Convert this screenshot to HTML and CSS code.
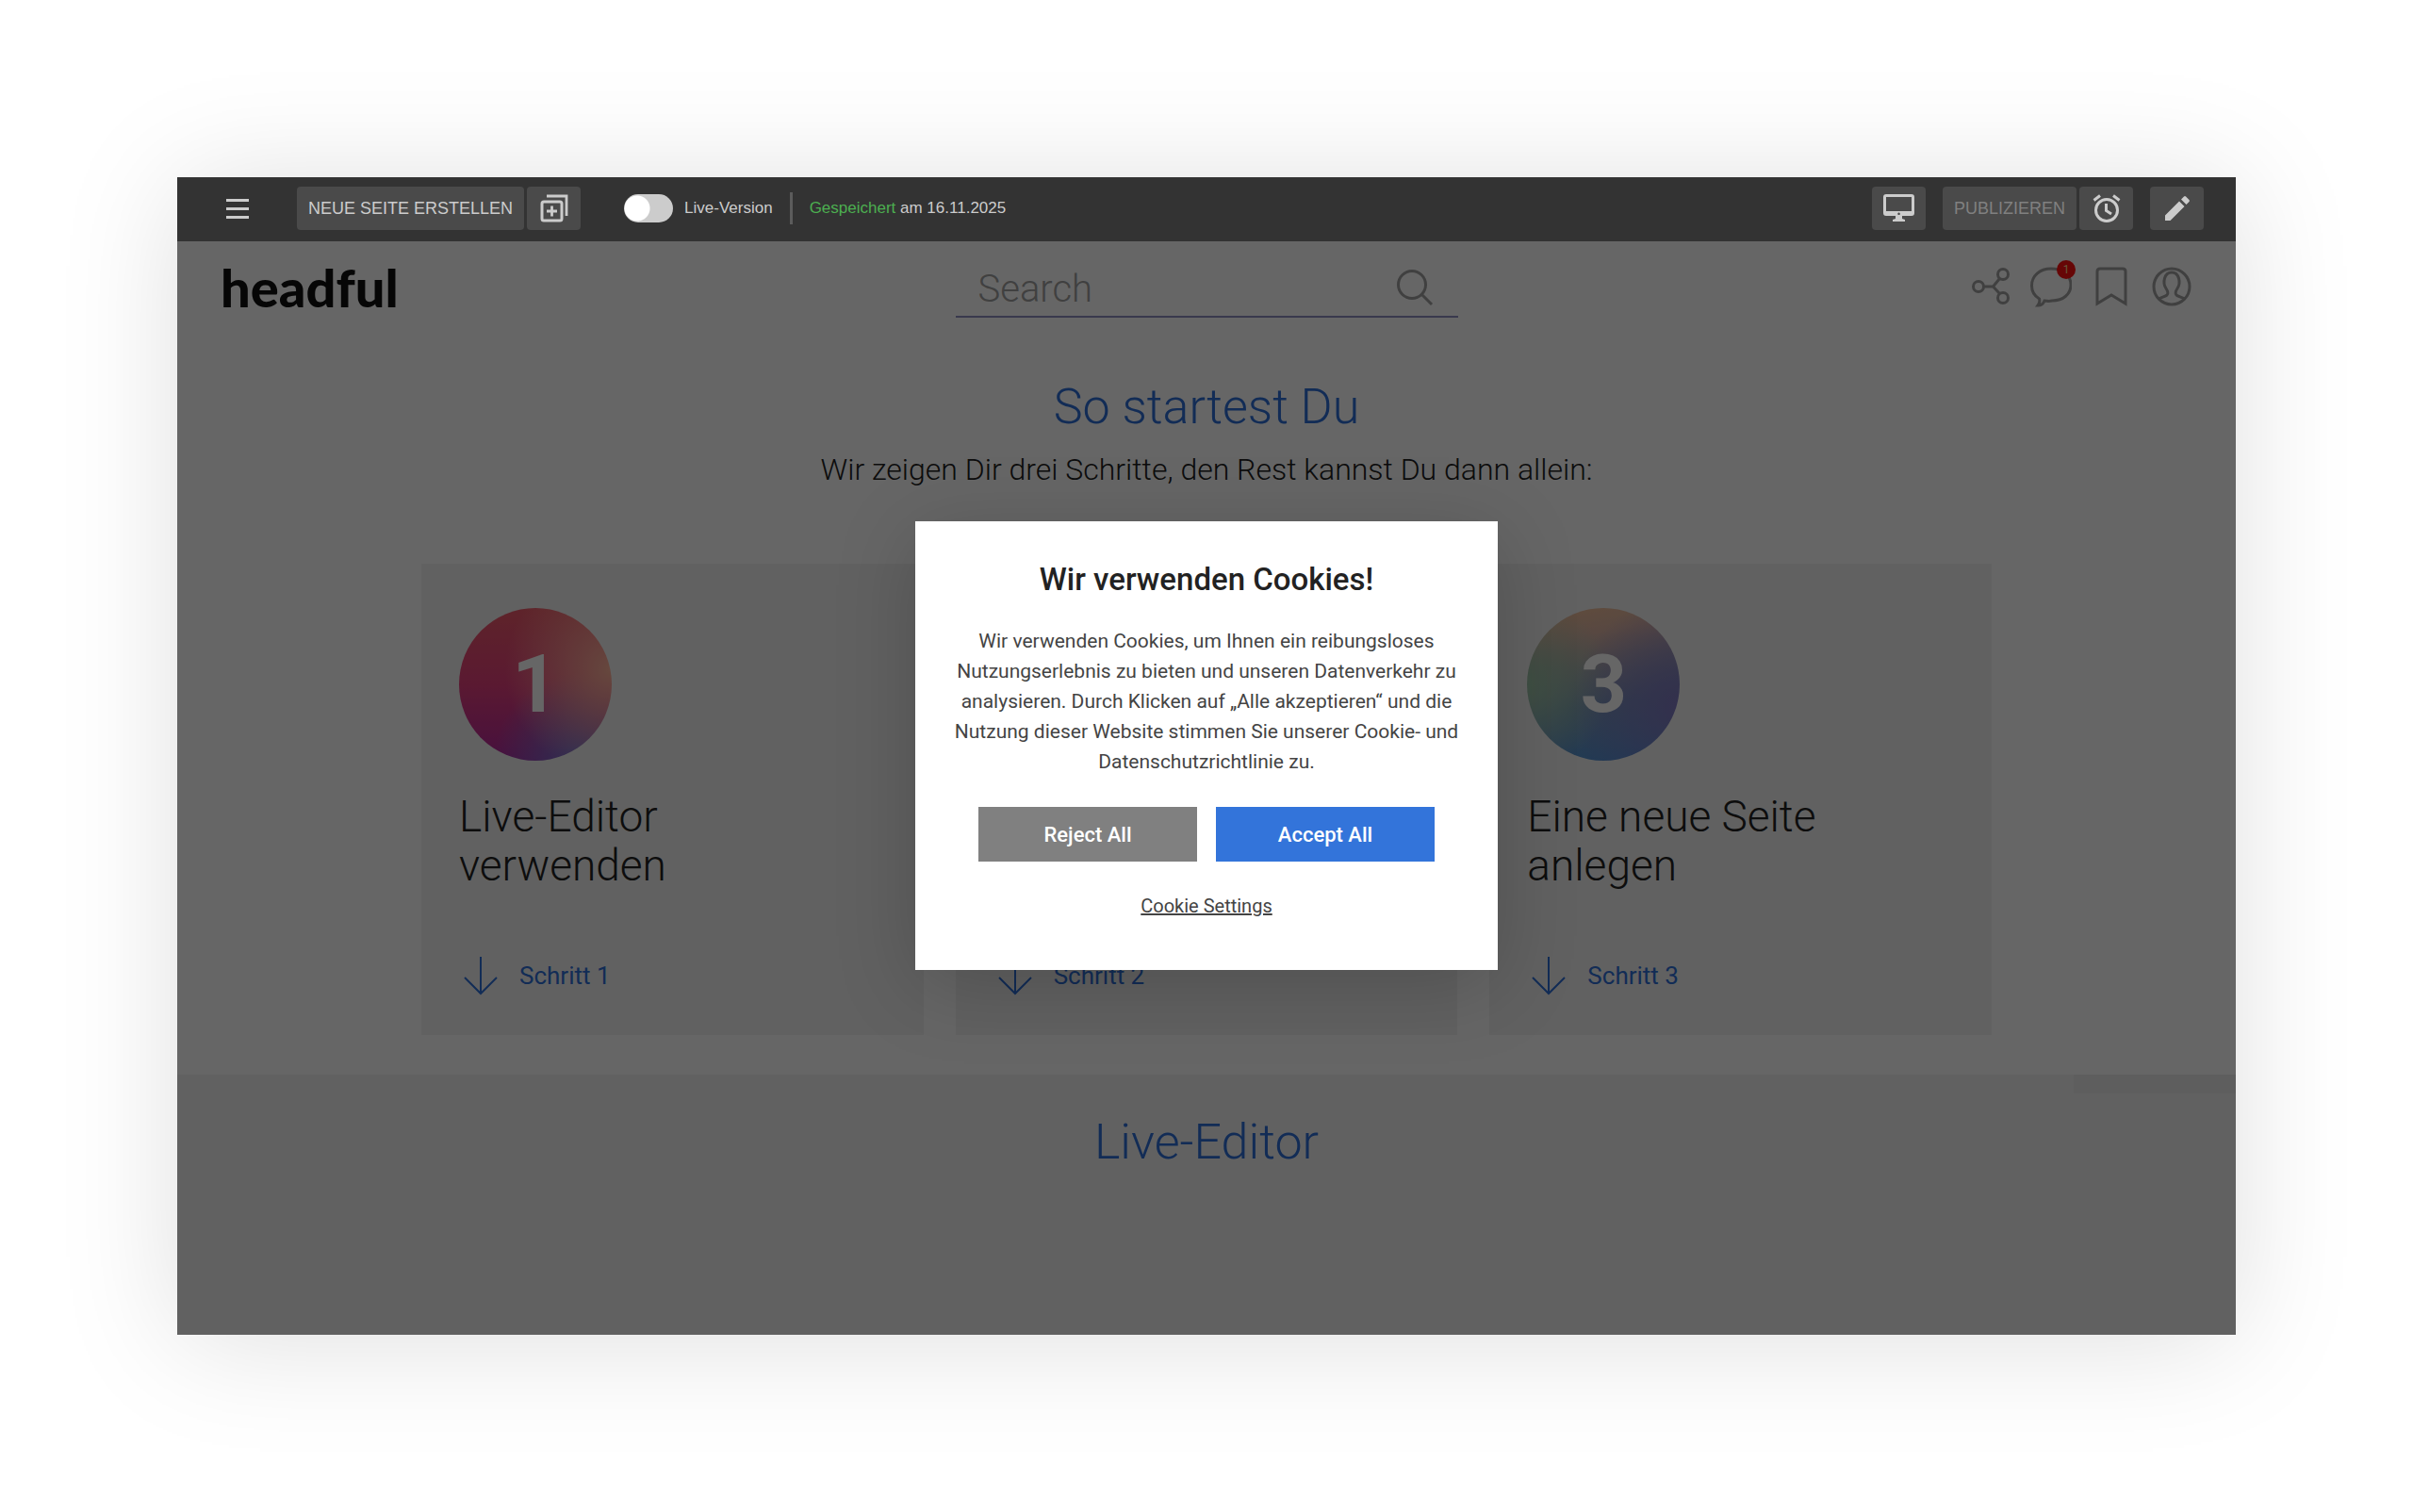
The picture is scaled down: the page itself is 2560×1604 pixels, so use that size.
FILE: index.html
```html
<!DOCTYPE html>
<html lang="de">
<head>
    <meta charset="UTF-8">
    <meta name="viewport" content="width=device-width, initial-scale=1.0">
    <title>headful – So startest Du</title>
    <link rel="stylesheet" href="styles.css">
</head>
<body>
    <div class="window">

        <!-- Editor toolbar -->
        <div class="toolbar">
            <button class="menu-button" type="button" aria-label="Menü">
                <svg width="24" height="21" viewBox="0 0 24 21"><path d="M0 0h24v3H0zM0 9h24v3H0zM0 18h24v3H0z" fill="currentColor"/></svg>
            </button>
            <div class="button-group">
                <button class="tool-button tool-text" type="button">NEUE SEITE ERSTELLEN</button>
                <button class="tool-button tool-icon" type="button" aria-label="Seite duplizieren">
                    <svg width="30" height="30" viewBox="0 0 30 30" fill="none" stroke="currentColor" stroke-width="3">
                        <rect x="2" y="8" width="21" height="20" rx="2"/>
                        <path d="M7 2h21v21M12.500 12.500v11M7 18h11" stroke-width="2.800"/>
                    </svg>
                </button>
            </div>
            <label class="switch">
                <input type="checkbox" class="switch-input">
                <span class="switch-label">Live-Version</span>
            </label>
            <span class="separator"></span>
            <p class="status"><span class="saved">Gespeichert</span> am 16.11.2025</p>

            <div class="toolbar-right">
                <button class="tool-button tool-icon" type="button" aria-label="Vorschau">
                    <svg width="33" height="30" viewBox="0 0 33 30">
                        <path fill="currentColor" fill-rule="evenodd" d="M3 0h27a3 3 0 0 1 3 3v17a3 3 0 0 1-3 3H20v3l3 1v2H10v-2l3-1v-3H3a3 3 0 0 1-3-3V3a3 3 0 0 1 3-3zM3 3v15h27V3zM16.500 19.500a1.300 1.300 0 1 0 .1 0z"/>
                    </svg>
                </button>
                <div class="button-group">
                    <button class="tool-button tool-text" type="button" disabled>PUBLIZIEREN</button>
                    <button class="tool-button tool-icon" type="button" aria-label="Zeitplan">
                        <svg width="30" height="30" viewBox="0 0 30 30" fill="none" stroke="currentColor" stroke-width="3">
                            <circle cx="15" cy="17" r="11.500"/>
                            <path d="M14.500 10v7.500l5.500 3.500M1.500 6.500l6.500-5M28.500 6.500l-6.500-5"/>
                        </svg>
                    </button>
                </div>
                <button class="tool-button tool-icon" type="button" aria-label="Bearbeiten">
                    <svg width="30" height="30" viewBox="0 0 30 30" fill="currentColor"><path d="M2 22.500V28h5.500L22.500 13 17 7.500zM27.500 8a1.500 1.500 0 0 0 0-2L24 2.500a1.500 1.500 0 0 0-2 0L19 5.500 24.500 11z"/></svg>
                </button>
            </div>
        </div>

        <div class="page">
            <header class="header">
                <a class="logo" href="#">headful</a>
                <form class="search">
                    <input class="search-input" type="text" placeholder="Search" aria-label="Search">
                    <button class="search-button" type="button" aria-label="Suchen">
                        <svg width="40" height="40" viewBox="0 0 40 40" fill="none" stroke="currentColor" stroke-width="3"><circle cx="17" cy="17" r="14.500"/><path d="M27.500 27.500 38 38"/></svg>
                    </button>
                </form>
                <nav class="header-icons">
                    <a href="#" aria-label="Teilen">
                        <svg width="44" height="44" viewBox="0 0 44 44" fill="none" stroke="currentColor" stroke-width="3"><circle cx="9" cy="22" r="5.500"/><circle cx="35" cy="9" r="5.500"/><circle cx="35" cy="34" r="5.500"/><path d="M14.500 22h10l7-8.500M24.500 22l7 7.500"/></svg>
                    </a>
                    <a class="messages" href="#" aria-label="Nachrichten">
                        <svg width="44" height="44" viewBox="0 0 44 44" fill="none" stroke="currentColor" stroke-width="3"><path d="M22 3C10 3 1.500 10.500 1.500 21c0 6 3 11 8 14 1 3 0 5-1.500 7 4 0 6-2 7-5 3 0 4 1 8 0 12 0 20-7 20-17S34 3 22 3z"/></svg>
                        <span class="badge">1</span>
                    </a>
                    <a href="#" aria-label="Merkliste">
                        <svg width="44" height="44" viewBox="0 0 44 44" fill="none" stroke="currentColor" stroke-width="3"><path d="M7 40V6q0-3 3-3h24q3 0 3 3v34L22 31z"/></svg>
                    </a>
                    <a href="#" aria-label="Profil">
                        <svg width="44" height="44" viewBox="0 0 44 44" fill="none" stroke="currentColor" stroke-width="3"><circle cx="22" cy="22" r="19"/><path d="M8 35.500c2-2 7-3 9-4.500 2-2 1-4-1-7-4-6-2-17 6-17s10 11 6 17c-2 3-3 5-1 7 2 1.500 7 2.500 9 4.500"/></svg>
                    </a>
                </nav>
            </header>

            <section class="intro">
                <h1 class="headline">So startest Du</h1>
                <p class="subline">Wir zeigen Dir drei Schritte, den Rest kannst Du dann allein:</p>
                <div class="cards">
                    <article class="card">
                        <span class="number number-one">1</span>
                        <h2 class="card-title">Live-Editor verwenden</h2>
                        <a class="step" href="#live-editor">
                            <svg width="46" height="42" viewBox="0 0 46 42" fill="none" stroke="currentColor" stroke-width="2"><path d="M23 1v38M6 23l17 17 17-17"/></svg>
                            Schritt 1
                        </a>
                    </article>
                    <article class="card">
                        <a class="step" href="#live-editor">
                            <svg width="46" height="42" viewBox="0 0 46 42" fill="none" stroke="currentColor" stroke-width="2"><path d="M23 1v38M6 23l17 17 17-17"/></svg>
                            Schritt 2
                        </a>
                    </article>
                    <article class="card">
                        <span class="number number-three">3</span>
                        <h2 class="card-title">Eine neue Seite anlegen</h2>
                        <a class="step" href="#live-editor">
                            <svg width="46" height="42" viewBox="0 0 46 42" fill="none" stroke="currentColor" stroke-width="2"><path d="M23 1v38M6 23l17 17 17-17"/></svg>
                            Schritt 3
                        </a>
                    </article>
                </div>
            </section>

            <section class="editor" id="live-editor">
                <h2 class="headline">Live-Editor</h2>
                <div class="corner-shade"></div>
            </section>

            <!-- Cookie dialog -->
            <div class="overlay">
                <div class="cookie-dialog" role="dialog" aria-labelledby="cookie-title">
                    <h2 class="cookie-title" id="cookie-title">Wir verwenden Cookies!</h2>
                    <p class="cookie-text">Wir verwenden Cookies, um Ihnen ein reibungsloses<br>Nutzungserlebnis zu bieten und unseren Datenverkehr zu<br>analysieren. Durch Klicken auf „Alle akzeptieren“ und die<br>Nutzung dieser Website stimmen Sie unserer Cookie- und<br>Datenschutzrichtlinie zu.</p>
                    <div class="cookie-buttons">
                        <button class="cookie-button reject" type="button">Reject All</button>
                        <button class="cookie-button accept" type="button">Accept All</button>
                    </div>
                    <a class="cookie-settings" href="#">Cookie Settings</a>
                </div>
            </div>
        </div>
    </div>
</body>
</html>
```
FILE: styles.css
```css
* {
    box-sizing: border-box;
}

body {
    margin: 0;
    min-height: 100vh;
    padding: 188px;
    display: flex;
    background-color: #fff;
    font-family: Roboto, sans-serif;
    color: #222;
}

h1, h2, p {
    margin: 0;
}

a {
    color: inherit;
    text-decoration: none;
}

button {
    border: none;
    padding: 0;
    cursor: pointer;
}

svg {
    display: block;
}

.window {
    flex: 1;
    display: flex;
    flex-direction: column;
    box-shadow: 0 6px 120px rgba(0, 0, 0, 0.13);
}

/* Toolbar */
.toolbar {
    height: 68px;
    padding: 0 34px 2px 52px;
    display: flex;
    align-items: center;
    background-color: #333;
    color: #ccc;
    font-family: "Liberation Sans", Arial, sans-serif;
    font-size: 17px;
}

.menu-button {
    margin-right: 51px;
    background: none;
    color: #ccc;
}

.button-group {
    display: flex;
    gap: 3px;
}

.tool-button {
    height: 46px;
    display: flex;
    align-items: center;
    justify-content: center;
    border-radius: 4px;
    background-color: #4a4a4a;
    color: #ccc;
    font-family: inherit;
    font-size: 18px;
}

.tool-button:disabled {
    color: #808080;
}

.tool-text {
    padding: 0 12px;
}

.tool-icon {
    width: 57px;
}

.switch {
    margin-left: 46px;
    display: flex;
    align-items: center;
    gap: 12px;
}

.switch-input {
    appearance: none;
    width: 52px;
    height: 30px;
    margin: 0;
    border-radius: 15px;
    background: radial-gradient(circle at 14px 15px, #fff 13px, #ccc 14px);
}

.separator {
    width: 3px;
    height: 34px;
    margin: 0 18px;
    background-color: #5c5c5c;
}

.saved {
    color: #4caf50;
}

.toolbar-right {
    margin-left: auto;
    display: flex;
    gap: 18px;
}

/* Page */
.page {
    flex: 1;
    position: relative;
    display: flex;
    flex-direction: column;
    background-color: #fff;
}

.header {
    height: 100px;
    padding: 0 46px 4px;
    display: grid;
    grid-template-columns: 1fr 533px 1fr;
    align-items: center;
}

.logo {
    color: #111;
    font-family: Lato, sans-serif;
    font-size: 56px;
    font-weight: 900;
}

.search {
    height: 66px;
    padding-top: 4px;
    display: flex;
    align-items: center;
    border-bottom: 2px solid #9090c0;
}

.search-input {
    flex: 1;
    min-width: 0;
    padding: 2px 0 0 24px;
    border: none;
    background: none;
    font-family: inherit;
    font-size: 40px;
    font-weight: 300;
}

.search-input::placeholder {
    color: #a0a0a0;
    opacity: 1;
}

.search-button {
    margin-right: 26px;
    background: none;
    color: #a0a0a0;
}

.header-icons {
    display: flex;
    justify-content: flex-end;
    gap: 20px;
    color: #a0a0a0;
}

.messages {
    position: relative;
}

.badge {
    position: absolute;
    top: -6px;
    right: -4px;
    width: 20px;
    height: 20px;
    border-radius: 10px;
    background-color: #ff1010;
    color: #ffd890;
    font-size: 12px;
    line-height: 20px;
    text-align: center;
}

.intro {
    padding: 48px 0 42px;
    display: flex;
    flex-direction: column;
    align-items: center;
}

.headline {
    color: #2f6fd6;
    font-size: 52px;
    font-weight: 300;
    line-height: 56px;
    text-align: center;
}

.subline {
    margin: 18px 0 80px;
    font-size: 32px;
    font-weight: 300;
    line-height: 40px;
}

.cards {
    width: calc(100% - 518px);
    display: grid;
    grid-template-columns: repeat(3, 1fr);
    gap: 34px;
}

.card {
    height: 500px;
    padding: 47px 40px 42px;
    display: flex;
    flex-direction: column;
    align-items: flex-start;
    background-color: #f3f3f3;
}

.number {
    width: 162px;
    height: 162px;
    border-radius: 50%;
    color: #fff;
    font-size: 86px;
    font-weight: 700;
    line-height: 162px;
    text-align: center;
}

.number-one {
    background: radial-gradient(circle at 100% 40%, #ffb49c 0%, rgba(255, 180, 156, 0) 60%), radial-gradient(circle at 80% 100%, #7078d0 0%, rgba(112, 100, 208, 0) 45%), linear-gradient(180deg, #ec5a6a 0%, #e2407c 50%, #b0289c 100%);
}

.number-three {
    background: radial-gradient(circle at 100% 65%, #8078c0 0%, rgba(128, 120, 192, 0) 60%), radial-gradient(circle at 0% 50%, #9cc4a8 0%, rgba(156, 196, 168, 0) 50%), linear-gradient(170deg, #f4c096 0%, #dcb4a4 20%, #7898b8 60%, #4a90d8 100%);
}

.card-title {
    max-width: 340px;
    margin-top: 33px;
    font-size: 46px;
    font-weight: 300;
    line-height: 52px;
}

.step {
    margin-top: auto;
    display: flex;
    align-items: center;
    gap: 18px;
    color: #2f6fd6;
    font-size: 26px;
}

.editor {
    flex: 1;
    position: relative;
    padding-top: 44px;
    background-color: #f3f3f3;
}

.corner-shade {
    position: absolute;
    top: 0;
    right: 0;
    width: 172px;
    height: 20px;
    background-color: #ececec;
}

/* Cookie dialog */
.overlay {
    position: absolute;
    inset: 0;
    padding-bottom: 90px;
    display: flex;
    align-items: center;
    justify-content: center;
    background-color: rgba(0, 0, 0, 0.6);
}

.cookie-dialog {
    width: 618px;
    padding: 40px 24px 52px;
    display: flex;
    flex-direction: column;
    align-items: center;
    background-color: #fff;
    box-shadow: 0 16px 80px rgba(0, 0, 0, 0.18);
    text-align: center;
}

.cookie-title {
    font-size: 33px;
    font-weight: 500;
    line-height: 44px;
}

.cookie-text {
    margin: 27px 0 32px;
    color: #444;
    font-size: 21px;
    line-height: 32px;
}

.cookie-buttons {
    display: flex;
    gap: 20px;
}

.cookie-button {
    width: 232px;
    height: 58px;
    color: #fff;
    font-family: inherit;
    font-size: 22px;
    font-weight: 500;
}

.reject {
    background-color: #808080;
}

.accept {
    background-color: #3374da;
}

.cookie-settings {
    margin-top: 31px;
    color: #444;
    font-size: 20px;
    line-height: 32px;
    text-decoration: underline;
}
```
